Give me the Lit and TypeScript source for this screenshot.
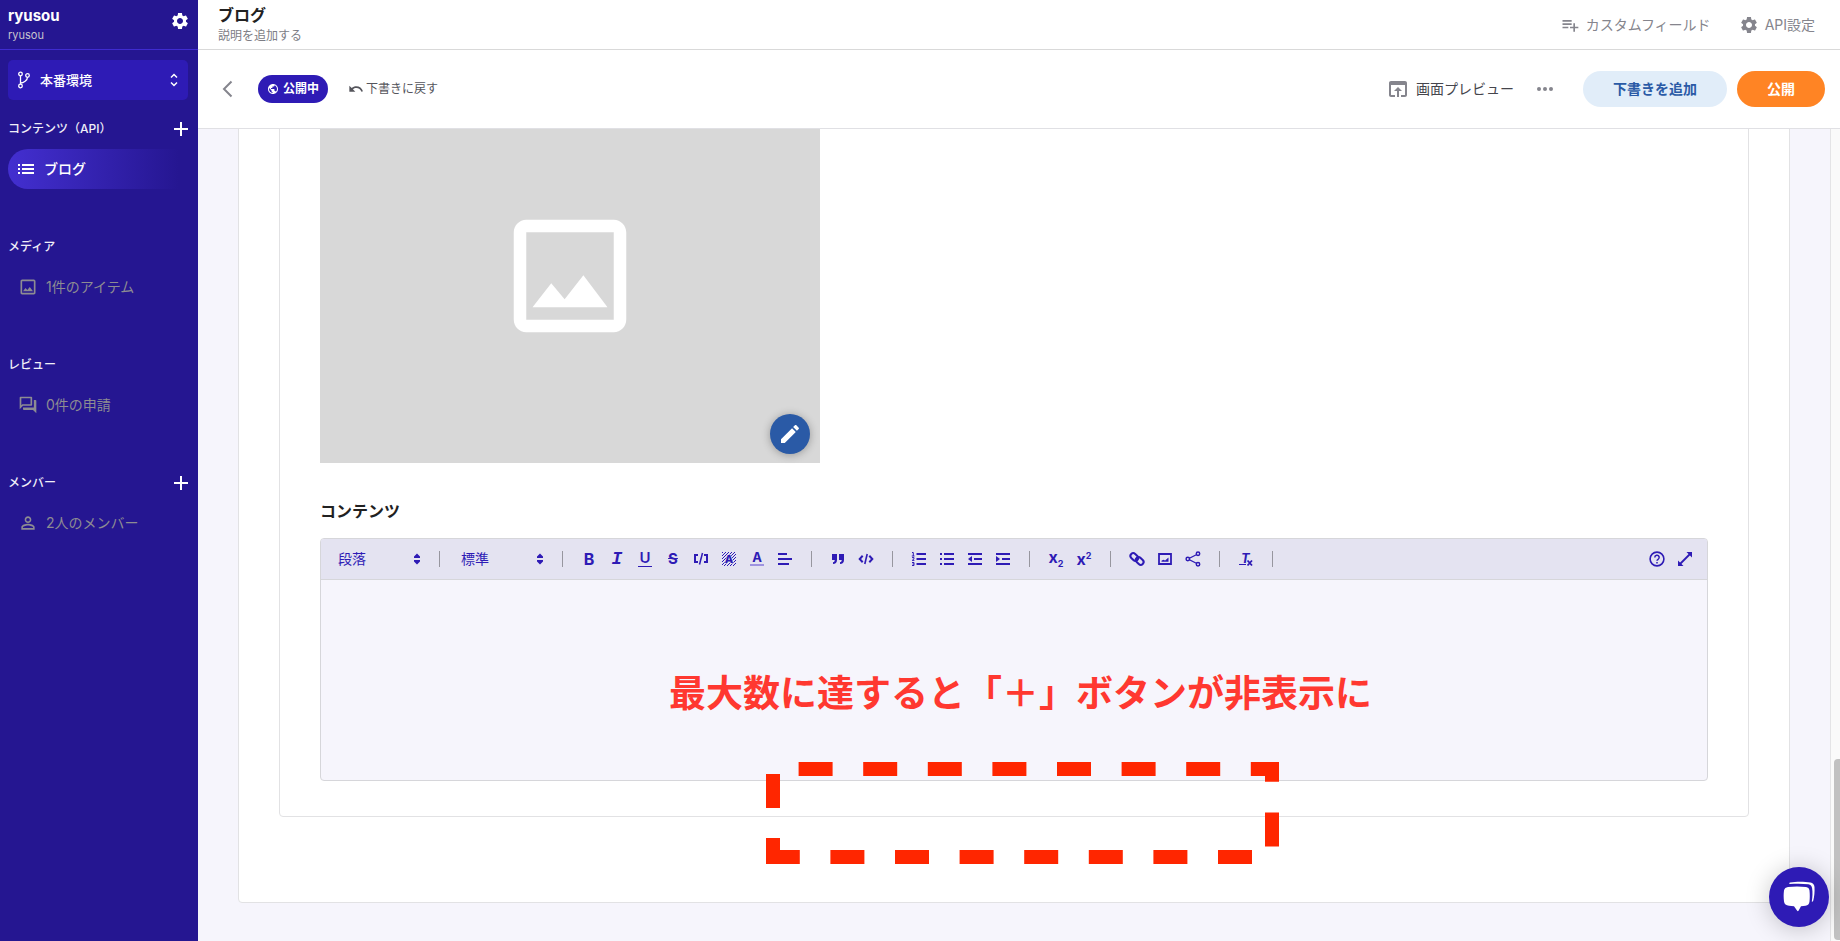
import { LitElement, html, css, svg } from "lit";
import { customElement } from "lit/decorators.js";

const GEAR =
  "M19.14 12.94c.04-.3.06-.61.06-.94 0-.32-.02-.64-.07-.94l2.03-1.58c.18-.14.23-.41.12-.61l-1.92-3.32c-.12-.22-.37-.29-.59-.22l-2.39.96c-.5-.38-1.03-.7-1.62-.94l-.36-2.54c-.04-.24-.24-.41-.48-.41h-3.84c-.24 0-.43.17-.47.41l-.36 2.54c-.59.24-1.13.57-1.62.94l-2.39-.96c-.22-.08-.47 0-.59.22L2.74 8.87c-.12.21-.08.47.12.61l2.03 1.58c-.05.3-.09.63-.09.94s.02.64.07.94l-2.03 1.58c-.18.14-.23.41-.12.61l1.92 3.32c.12.22.37.29.59.22l2.39-.96c.5.38 1.03.7 1.62.94l.36 2.54c.05.24.24.41.48.41h3.84c.24 0 .44-.17.47-.41l.36-2.54c.59-.24 1.13-.56 1.62-.94l2.39.96c.22.08.47 0 .59-.22l1.92-3.32c.12-.22.07-.47-.12-.61l-2.01-1.58zM12 15.6c-1.98 0-3.6-1.62-3.6-3.6s1.62-3.6 3.6-3.6 3.6 1.62 3.6 3.6-1.62 3.6-3.6 3.6z";
const PICTURE =
  "M19 5v14H5V5h14m0-2H5c-1.1 0-2 .9-2 2v14c0 1.1.9 2 2 2h14c1.1 0 2-.9 2-2V5c0-1.1-.9-2-2-2zm-4.86 8.86l-3 3.87L9 13.14 6 17h12l-3.86-5.14z";
const CHAT =
  "M15 4v7H5.17L4 12.17V4h11m1-2H3c-.55 0-1 .45-1 1v14l4-4h10c.55 0 1-.45 1-1V3c0-.55-.45-1-1-1zm5 4h-2v9H6v2c0 .55.45 1 1 1h11l4 4V7c0-.55-.45-1-1-1z";
const PERSON =
  "M12 5.9c1.16 0 2.1.94 2.1 2.1s-.94 2.1-2.1 2.1S9.9 9.16 9.9 8s.94-2.1 2.1-2.1m0 9c2.97 0 6.1 1.46 6.1 2.1v1.1H5.9V17c0-.64 3.13-2.1 6.1-2.1M12 4C9.79 4 8 5.79 8 8s1.79 4 4 4 4-1.79 4-4-1.79-4-4-4zm0 9c-2.67 0-8 1.34-8 4v3h16v-3c0-2.66-5.33-4-8-4z";
const GLOBE =
  "M12 2C6.48 2 2 6.48 2 12s4.48 10 10 10 10-4.48 10-10S17.52 2 12 2zm-1 17.93c-3.95-.49-7-3.85-7-7.93 0-.62.08-1.21.21-1.79L9 15v1c0 1.1.9 2 2 2v1.93zm6.9-2.54c-.26-.81-1-1.39-1.9-1.39h-1v-3c0-.55-.45-1-1-1H8v-2h2c.55 0 1-.45 1-1V7h2c1.1 0 2-.9 2-2v-.41c2.93 1.19 5 4.06 5 7.41 0 2.08-.8 3.97-2.1 5.39z";
const UNDO =
  "M12.5 8c-2.65 0-5.05.99-6.9 2.6L2 7v9h9l-3.62-3.62c1.39-1.16 3.16-1.88 5.12-1.88 3.54 0 6.55 2.31 7.6 5.5l2.37-.78C21.08 11.03 17.15 8 12.5 8z";
const PREVIEW =
  "M19 4H5c-1.11 0-2 .9-2 2v12c0 1.1.89 2 2 2h4v-2H5V8h14v10h-4v2h4c1.1 0 2-.9 2-2V6c0-1.1-.89-2-2-2zm-7 6l-4 4h3v6h2v-6h3l-4-4z";
const LIST_ADD =
  "M14 10H3v2h11v-2zm0-4H3v2h11V6zm4 8v-4h-2v4h-4v2h4v4h2v-4h4v-2h-4zM3 16h7v-2H3v2z";
const PENCIL =
  "M3 17.25V21h3.75L17.81 9.94l-3.75-3.75L3 17.25zM20.71 7.04c.39-.39.39-1.02 0-1.41l-2.34-2.34c-.39-.39-1.02-.39-1.41 0l-1.83 1.83 3.75 3.75 1.83-1.83z";

const icon = (d: string, size: number) =>
  html`<svg width=${size} height=${size} viewBox="0 0 24 24" fill="currentColor" aria-hidden="true"><path d=${d} /></svg>`;

const glyph = (body: unknown) =>
  html`<svg class="glyph" width="16" height="16" viewBox="0 0 16 16" fill="none" stroke="currentColor" stroke-width="2" aria-hidden="true">${body}</svg>`;

const plus = html`<svg width="14" height="14" viewBox="0 0 14 14" stroke="currentColor" stroke-width="2" aria-hidden="true"><path d="M7 0v14M0 7h14" /></svg>`;

const tools = {
  embed: glyph(svg`<path d="M5 4H2v7h3M11 4h3v7h-3" /><path d="M9.500 2L6.500 13.500" stroke-width="1.500" />`),
  shade: glyph(svg`<defs><pattern id="hatch" width="3" height="3" patternUnits="userSpaceOnUse"><path d="M2 0h1v1H2zM1 1h1v1H1zM0 2h1v1H0z" fill="currentColor" stroke="none" /></pattern></defs>
    <rect x="1" y="1" width="14" height="14" fill="url(#hatch)" stroke="none" />
    <text x="8" y="12" text-anchor="middle" font-size="11" font-weight="800" fill="currentColor" stroke="#e4e3f1" stroke-width="1" paint-order="stroke">A</text>`),
  align: glyph(svg`<path d="M1 3h9M1 8h14M1 13h11" stroke-width="1.800" />`),
  quote: glyph(svg`<path d="M2 3h5v6c0 2.500-1.500 4-4 4v-1.800c1.200 0 1.700-.8 1.700-2.200H2zM9 3h5v6c0 2.500-1.500 4-4 4v-1.800c1.200 0 1.700-.8 1.700-2.200H9z" fill="currentColor" stroke="none" />`),
  code: glyph(svg`<path d="M4.700 4.800L1.700 8l3 3.200M11.300 4.800l3 3.200-3 3.200" /><path d="M9.200 3L6.800 13" stroke-width="1.600" />`),
  ordered: glyph(svg`<path d="M5.500 3H15M5.500 8H15M5.500 13H15" /><path d="M1 1.500h1.300V5M.8 5h2.700M1 6.600h2v1.200L1.200 9.400h2.200M1 11.500h2v3H1M1.500 13H3" stroke-width="1" />`),
  bulleted: glyph(svg`<path d="M5 3h10M5 8h10M5 13h10M1 3h2M1 8h2M1 13h2" />`),
  outdent: glyph(svg`<path d="M1 3h14M7 8h8M1 13h14" /><path d="M1 8l4-3v6z" fill="currentColor" stroke="none" />`),
  indent: glyph(svg`<path d="M1 3h14M7 8h8M1 13h14" /><path d="M5 8L1 5v6z" fill="currentColor" stroke="none" />`),
  link: glyph(svg`<rect x="1" y="3.200" width="8.600" height="5.600" rx="2.800" transform="rotate(45 5.300 6)" /><rect x="6.400" y="7.200" width="8.600" height="5.600" rx="2.800" transform="rotate(45 10.700 10)" />`),
  image: glyph(svg`<path d="M2 3h12v10H2z" stroke-width="1.800" /><path d="M4.500 10.800V9.800l1.800-1 1.800.6L11.500 6.500v4.300z" fill="currentColor" stroke="none" />`),
  share: glyph(svg`<path d="M12.800 3L3 8l9.800 5" stroke-width="1.300" /><g fill="#e4e3f1" stroke-width="1.500"><circle cx="13" cy="2.800" r="1.700" /><circle cx="2.800" cy="8" r="1.700" /><circle cx="13" cy="13.200" r="1.700" /></g>`),
  clear: glyph(svg`<text x="3" y="12" font-size="13" font-weight="700" font-style="italic" fill="currentColor" stroke="none">T</text><path d="M1 13.500h7" stroke-width="1" /><path d="M9.500 9.500l4.500 5M14 9.500l-4.500 5" stroke-width="1.800" />`),
  help: glyph(svg`<circle cx="8" cy="8" r="6.900" stroke-width="1.600" /><path d="M5.800 6.500a2.200 2.200 0 1 1 3.300 1.800c-.7.400-1.100.8-1.100 1.500M8 11v1.400" stroke-width="1.500" />`),
  expand: glyph(svg`<path d="M3 13L13 3" stroke-width="1.800" /><path d="M9.500 1H15v5.500zM1 9.500V15h5.500z" fill="currentColor" stroke="none" />`),
};

@customElement("app-root")
export class AppRoot extends LitElement {
  static styles = css`
    :host {
      display: flex;
      height: 100vh;
      overflow: hidden;
      font-family: Inter, "Noto Sans CJK JP", sans-serif;
      font-size: 14px;
      line-height: 20px;
      color: #212121;
    }
    * { box-sizing: border-box; }
    svg { display: block; flex: none; }
    .glyph { overflow: visible; }
    button, select, textarea { font: inherit; color: inherit; margin: 0; padding: 0; border: 0; background: none; }
    a { color: inherit; text-decoration: none; }
    h1, h2, p { margin: 0; }

    .sidebar { width: 198px; flex: none; background: #251691; color: #fff; }
    .account { height: 50px; display: flex; justify-content: space-between; padding: 6px 8px 0; border-bottom: 1px solid #3f2bd0; }
    .account-name { font-size: 15px; font-weight: 700; }
    .account-id { font-size: 11px; line-height: 18px; color: #c8c5cf; }
    .account-gear { height: 30px; }
    .env { display: flex; align-items: center; gap: 8px; width: calc(100% - 18px); height: 40px; margin: 10px 10px 9px 8px; padding: 0 8px; border-radius: 5px; background: #2e1bb5; font-size: 13px; font-weight: 500; }
    .env-name { flex: 1; text-align: left; }
    .section { margin: 0 10px 38px 8px; }
    .section-head { display: flex; justify-content: space-between; align-items: center; height: 40px; font-size: 12px; font-weight: 500; color: #f0eff8; }
    .section-head button { color: #fff; }
    .nav { display: flex; align-items: center; gap: 8px; height: 40px; padding-left: 10px; color: #8d8c92; }
    .nav.active { gap: 6px; color: #fff; font-weight: 500; border-radius: 20px 0 0 20px; background: linear-gradient(90deg, #432fd0, #251691 95%); }

    .main { flex: 1; min-width: 0; display: flex; flex-direction: column; background: #fff; }
    .header { flex: none; height: 50px; display: flex; justify-content: space-between; padding: 4px 25px 0 20px; border-bottom: 1px solid #d9d9d9; }
    .title { font-size: 16px; font-weight: 700; line-height: 22px; }
    .description { font-size: 12px; line-height: 20px; color: #7d7d85; }
    .header-links { display: flex; gap: 28px; height: 41px; align-items: center; color: #85858d; }
    .header-links a, .preview { display: flex; align-items: center; gap: 6px; }
    .bar { flex: none; height: 79px; display: flex; align-items: center; padding: 0 15px 0 20px; border-bottom: 1px solid #e0e0e4; }
    .back { width: 20px; color: #85858d; }
    .status { display: flex; align-items: center; gap: 4px; height: 28px; margin: 0 20px; padding: 0 9px; border-radius: 14px; background: #2e1bb5; color: #fff; font-size: 12px; font-weight: 700; }
    .revert { display: flex; align-items: center; gap: 2px; font-size: 12px; color: #55555c; }
    .spacer { flex: 1; }
    .preview { color: #45454c; }
    .preview svg, .more { color: #85858d; }
    .more { margin: 0 30px 0 23px; }
    .pill { height: 36px; border-radius: 18px; font-weight: 700; }
    .draft { width: 144px; margin-right: 10px; background: #e1edf9; color: #2a5aa6; }
    .publish { width: 88px; background: #ff8424; color: #fff; }

    .body { flex: 1; min-height: 0; display: flex; background: #f6f5fc; }
    .viewport { flex: 1; min-width: 0; display: flex; flex-direction: column; justify-content: flex-end; overflow: hidden; padding: 0 40px 38px; }
    .card { border: 1px solid #e2e2e4; border-radius: 4px; background: #fff; padding: 0 40px 85px; }
    .fields { position: relative; border: 1px solid #e2e2e4; border-radius: 4px; padding: 100px 40px 35px; }
    .thumb { position: relative; display: flex; align-items: center; justify-content: center; width: 500px; max-width: 100%; height: 375px; background: #d8d8d8; color: #fff; }
    .edit { position: absolute; right: 10px; bottom: 9px; width: 40px; height: 40px; display: flex; align-items: center; justify-content: center; border-radius: 50%; background: #2a5aa6; color: #fff; box-shadow: 0 1px 8px rgba(0, 0, 0, 0.3); }
    .label { display: block; margin: 36px 0 15px; font-size: 16px; line-height: 24px; font-weight: 700; }
    .editor { border: 1px solid #d6d6da; border-radius: 4px; background: #f6f5fc; overflow: hidden; }
    .toolbar { display: flex; align-items: center; height: 41px; padding: 0 8px; background: #e4e3f1; border-bottom: 1px solid #d6d6da; color: #2e1bb5; }
    .pick { position: relative; display: flex; align-items: center; width: 98px; }
    .pick select { appearance: none; width: 100%; height: 28px; padding: 0 9px; }
    .pick svg { position: absolute; right: 6px; pointer-events: none; }
    .sep { width: 1px; height: 16px; margin: 0 12px; background: #97969f; }
    .tool { flex: none; display: flex; align-items: center; justify-content: center; width: 28px; height: 28px; font-weight: 700; font-size: 15px; line-height: 16px; }
    .italic { font-family: "Liberation Mono", monospace; font-style: italic; font-size: 18px; }
    .underline span { height: 16px; line-height: 13px; border-bottom: 1px solid; padding: 0 1px; font-weight: 600; }
    .strike { text-decoration: line-through; }
    .tint span { width: 14px; height: 14px; font-size: 13px; line-height: 11px; border-bottom: 2px solid #9e93df; }
    .script { font-size: 16px; }
    .script sub, .script sup { font-size: 9px; line-height: 8px; }
    .text { display: block; width: 100%; height: 200px; padding: 16px; resize: none; outline: none; }
    .track { flex: none; width: 10px; display: flex; flex-direction: column; align-items: flex-end; justify-content: flex-end; border-left: 1px solid #e4e4e6; background: #fafafa; padding-bottom: 1px; }
    .grip { width: 6px; height: 181px; border-radius: 4px 0 0 4px; background: #c1c1c1; }

    .note { position: absolute; left: 0; right: 0; bottom: 100px; padding-left: 13px; text-align: center; white-space: nowrap; pointer-events: none; color: #ff3830; font-size: 37px; line-height: 44px; font-weight: 700; }
    .frame { position: absolute; left: 50%; bottom: -48px; margin-left: -248px; pointer-events: none; }
    .chat { position: absolute; right: 11px; bottom: 14px; width: 60px; height: 60px; display: flex; align-items: center; justify-content: center; border-radius: 50%; background: #2e1bb5; color: #fff; box-shadow: 0 2px 24px rgba(0, 0, 0, 0.22); }
  `;

  private section(name: string, item: unknown, addable: boolean, active = false) {
    return html`<section class="section">
      <div class="section-head">
        <span>${name}</span>
        ${addable ? html`<button aria-label="追加">${plus}</button>` : ""}
      </div>
      <a class="nav ${active ? "active" : ""}" href="#">${item}</a>
    </section>`;
  }

  private pick(name: string, value: string) {
    return html`<div class="pick">
      <select aria-label=${name}><option>${value}</option></select>
      <svg width="8" height="12" viewBox="0 0 8 12" fill="currentColor" aria-hidden="true"><path d="M4 .5L7 3.500V5H1V3.500zM4 11.500L1 8.500V7h6v1.500z" /></svg>
    </div>`;
  }

  private tool(name: string, body: unknown, kind = "") {
    return html`<button class="tool ${kind}" aria-label=${name}>${body}</button>`;
  }

  render() {
    const sep = html`<span class="sep"></span>`;
    return html`
      <aside class="sidebar">
        <div class="account">
          <div>
            <p class="account-name">ryusou</p>
            <p class="account-id">ryusou</p>
          </div>
          <button class="account-gear" aria-label="設定">${icon(GEAR, 20)}</button>
        </div>
        <button class="env">
          <svg width="16" height="18" viewBox="0 0 16 18" fill="none" stroke="currentColor" stroke-width="1.300" aria-hidden="true">
            <circle cx="4.500" cy="3" r="1.800" /><circle cx="4.500" cy="15" r="1.800" /><circle cx="11.500" cy="4.500" r="1.800" />
            <path d="M4.500 4.800v8.400M11.500 6.300c0 3-4 5.700-7 5.700" />
          </svg>
          <span class="env-name">本番環境</span>
          <svg width="12" height="14" viewBox="0 0 12 14" fill="none" stroke="currentColor" stroke-width="1.500" aria-hidden="true"><path d="M3 4.500l3-3 3 3M3 9.500l3 3 3-3" /></svg>
        </button>
        <nav>
          ${this.section(
            "コンテンツ（API）",
            html`<svg width="20" height="20" viewBox="0 0 20 20" stroke="currentColor" stroke-width="2" aria-hidden="true"><path d="M0 6h2M4 6h12M0 10h2M4 10h12M0 14h2M4 14h12" /></svg><span>ブログ</span>`,
            true,
            true
          )}
          ${this.section("メディア", html`${icon(PICTURE, 20)}<span>1件のアイテム</span>`, false)}
          ${this.section("レビュー", html`${icon(CHAT, 20)}<span>0件の申請</span>`, false)}
          ${this.section("メンバー", html`${icon(PERSON, 20)}<span>2人のメンバー</span>`, true)}
        </nav>
      </aside>

      <main class="main">
        <header class="header">
          <div>
            <h1 class="title">ブログ</h1>
            <p class="description">説明を追加する</p>
          </div>
          <div class="header-links">
            <a href="#">${icon(LIST_ADD, 20)}カスタムフィールド</a>
            <a href="#">${icon(GEAR, 20)}API設定</a>
          </div>
        </header>
        <div class="bar">
          <button class="back" aria-label="戻る">
            <svg width="20" height="18" viewBox="0 0 20 18" fill="none" stroke="currentColor" stroke-width="2" aria-hidden="true"><path d="M13.500 1.500L6 9l7.500 7.500" /></svg>
          </button>
          <span class="status">${icon(GLOBE, 12)}公開中</span>
          <button class="revert">${icon(UNDO, 16)}下書きに戻す</button>
          <span class="spacer"></span>
          <button class="preview">${icon(PREVIEW, 24)}画面プレビュー</button>
          <button class="more" aria-label="その他">
            <svg width="16" height="4" viewBox="0 0 16 4" fill="currentColor" aria-hidden="true"><circle cx="2" cy="2" r="2" /><circle cx="8" cy="2" r="2" /><circle cx="14" cy="2" r="2" /></svg>
          </button>
          <button class="pill draft">下書きを追加</button>
          <button class="pill publish">公開</button>
        </div>

        <div class="body">
          <div class="viewport">
            <div class="card">
              <div class="fields">
                <div class="thumb">
                  ${icon(PICTURE, 150)}
                  <button class="edit" aria-label="画像を編集">${icon(PENCIL, 24)}</button>
                </div>
                <label class="label" for="content">コンテンツ</label>
                <div class="editor">
                  <div class="toolbar">
                    ${this.pick("段落スタイル", "段落")}${sep}${this.pick("文字サイズ", "標準")}${sep}
                    ${this.tool("太字", "B", "script")}
                    ${this.tool("斜体", "I", "italic")}
                    ${this.tool("下線", html`<span>U</span>`, "underline")}
                    ${this.tool("取り消し線", "S", "strike")}
                    ${this.tool("埋め込み", tools.embed)}
                    ${this.tool("背景色", tools.shade)}
                    ${this.tool("文字色", html`<span>A</span>`, "tint")}
                    ${this.tool("配置", tools.align)}${sep}
                    ${this.tool("引用", tools.quote)}
                    ${this.tool("コード", tools.code)}${sep}
                    ${this.tool("番号付きリスト", tools.ordered)}
                    ${this.tool("箇条書き", tools.bulleted)}
                    ${this.tool("字下げ解除", tools.outdent)}
                    ${this.tool("字下げ", tools.indent)}${sep}
                    ${this.tool("下付き", html`<span>x<sub>2</sub></span>`, "script")}
                    ${this.tool("上付き", html`<span>x<sup>2</sup></span>`, "script")}${sep}
                    ${this.tool("リンク", tools.link)}
                    ${this.tool("画像", tools.image)}
                    ${this.tool("共有", tools.share)}${sep}
                    ${this.tool("書式をクリア", tools.clear)}${sep}
                    <span class="spacer"></span>
                    ${this.tool("ヘルプ", tools.help)}
                    ${this.tool("全画面", tools.expand)}
                  </div>
                  <textarea class="text" id="content"></textarea>
                </div>
                <p class="note">最大数に達すると「＋」ボタンが非表示に</p>
                <svg class="frame" width="514" height="104" viewBox="0 0 514 104" fill="none" stroke="#ff2600" stroke-width="14" aria-hidden="true">
                  <path d="M7 48V9H506V97H7V89" stroke-dasharray="34 30.600" />
                  <path d="M7 78V97H33" />
                </svg>
              </div>
            </div>
          </div>
          <div class="track"><div class="grip"></div></div>
        </div>
      </main>

      <button class="chat" aria-label="チャット">
        <svg width="34" height="34" viewBox="0 0 34 34" fill="currentColor" aria-hidden="true">
          <path d="M8 2.500c6-1 14.500-1 20.500 0 2.300.4 3.800 2 4 4.500.3 5-.2 9.500-1.200 13.500-.3.900-.9 1.200-1.500 1.300.8-5 .9-9.500.3-13.500-.3-2.200-1.500-3.700-3.700-4-6-.7-12-.7-18.900-.2-.3-.7-.2-1.400.5-1.600z" />
          <path d="M6 7c5.500-.7 12.500-.7 18 0 2 .3 3.300 1.500 3.500 3.500.4 4 .4 7.500 0 11-.3 2.500-1.500 4-4 4.300l-4.500.4-2.500 4.600c-.4.500-1 .5-1.300 0L12 26.200l-5-.4C4 25.500 2.300 24 2 21.500c-.5-4-.5-7.500 0-11C2.300 8.500 4 7.300 6 7z" />
        </svg>
      </button>
    `;
  }
}
